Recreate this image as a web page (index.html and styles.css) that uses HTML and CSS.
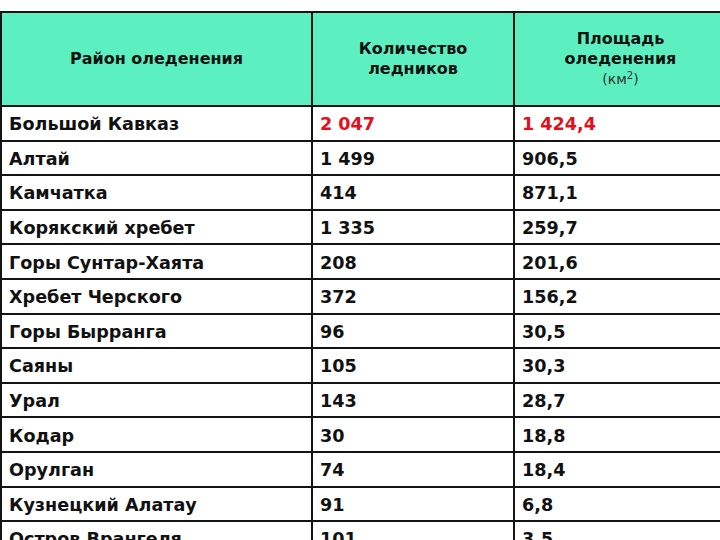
FILE: index.html
```html
<!DOCTYPE html>
<html lang="ru">
<head>
<meta charset="utf-8">
<link rel="stylesheet" href="styles.css">
</head>
<body>
<table class="glaciers">
  <thead>
    <tr class="head">
      <th class="c1">Район оледенения</th>
      <th class="c2">Количество<br>ледников</th>
      <th class="c3">Площадь<br>оледенения<br><span class="unit">(км<sup>2</sup>)</span></th>
    </tr>
  </thead>
  <tbody>
    <tr class="hl"><td>Большой Кавказ</td><td>2 047</td><td>1 424,4</td></tr>
    <tr><td>Алтай</td><td>1 499</td><td>906,5</td></tr>
    <tr><td>Камчатка</td><td>414</td><td>871,1</td></tr>
    <tr><td>Корякский хребет</td><td>1 335</td><td>259,7</td></tr>
    <tr><td>Горы Сунтар-Хаята</td><td>208</td><td>201,6</td></tr>
    <tr><td>Хребет Черского</td><td>372</td><td>156,2</td></tr>
    <tr><td>Горы Бырранга</td><td>96</td><td>30,5</td></tr>
    <tr><td>Саяны</td><td>105</td><td>30,3</td></tr>
    <tr><td>Урал</td><td>143</td><td>28,7</td></tr>
    <tr><td>Кодар</td><td>30</td><td>18,8</td></tr>
    <tr><td>Орулган</td><td>74</td><td>18,4</td></tr>
    <tr><td>Кузнецкий Алатау</td><td>91</td><td>6,8</td></tr>
    <tr><td>Остров Врангеля</td><td>101</td><td>3,5</td></tr>
  </tbody>
</table>
</body>
</html>
```
FILE: styles.css
```css
html, body {
  margin: 0;
  padding: 0;
  background: #ffffff;
  overflow: hidden;
}
body {
  padding-top: 11px;
  font-family: "DejaVu Sans", Verdana, sans-serif;
}
.glaciers {
  border-collapse: collapse;
  table-layout: fixed;
  width: 720px;
}
.glaciers th, .glaciers td {
  border: 2px solid #141414;
  padding: 0 0 0 7px;
  vertical-align: middle;
  white-space: nowrap;
}
.glaciers th:last-child, .glaciers td:last-child {
  border-right: none;
}
.glaciers th {
  background: #5cefbf;
  color: #111;
  font-size: 16px;
  font-weight: bold;
  line-height: 20px;
  text-align: center;
  padding: 0;
}
.glaciers .c1 { width: 309px; }
.glaciers .c2 { width: 200px; }
.glaciers .c3 { width: 211px; }
.head { height: 94px; }
.c3 .unit {
  font-weight: normal;
  font-size: 14px;
  color: #333;
}
.unit sup {
  font-size: 10px;
  line-height: 0;
  vertical-align: 5px;
}
.glaciers td {
  height: 30.6px;
  font-size: 17.6px;
  font-weight: bold;
  color: #111;
  padding-top: 2px;
}
.hl td:nth-child(2), .hl td:nth-child(3) {
  color: #e3101c;
}
```
